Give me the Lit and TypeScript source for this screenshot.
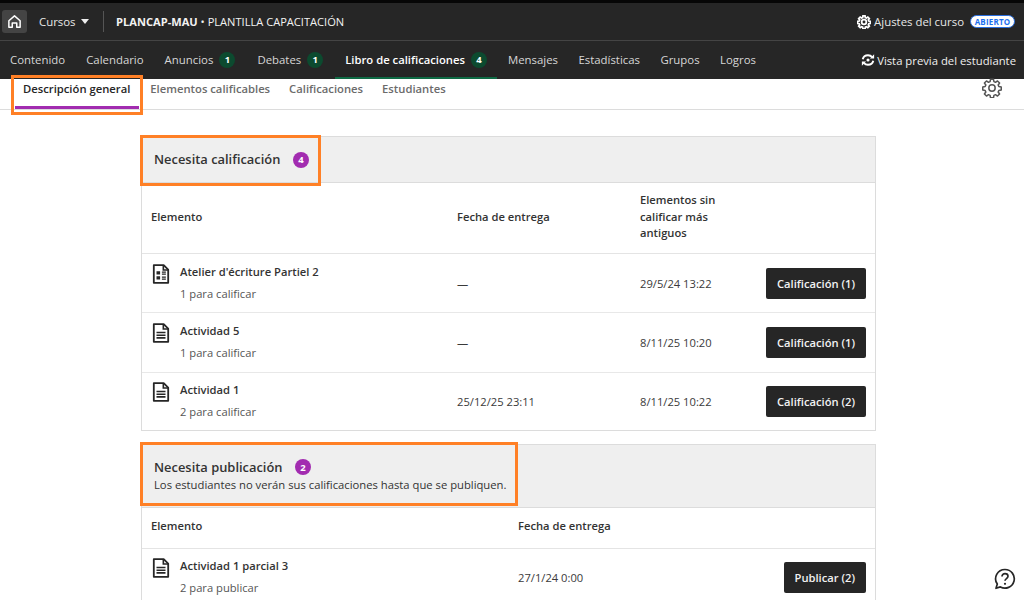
import { LitElement, html, css, svg } from "lit";
import { customElement } from "lit/decorators.js";

const docIcon = svg`<path d="M2 1.2h11l5 5V20.8H2z" fill="none" stroke="#262626" stroke-width="2" stroke-linejoin="round"/><path d="M12.6 1.4v5.2h5.2" fill="none" stroke="#262626" stroke-width="1.8"/><path d="M5 10.4h10M5 13.4h10M5 16.4h10" stroke="#262626" stroke-width="1.7"/>`;
const formIcon = svg`<path d="M2 1.2h11l5 5V20.8H2z" fill="none" stroke="#262626" stroke-width="2" stroke-linejoin="round"/><path d="M12.6 1.4v5.2h5.2" fill="none" stroke="#262626" stroke-width="1.8"/><path d="M5 8h4v3.6H5zM5 13.6h4v3.4H5z" fill="#262626"/><path d="M11 9h4.4M11 11.2h4.4M11 14.4h4.4M11 16.6h4.4" stroke="#262626" stroke-width="1.4"/>`;

const gearPath = "M10.2 1.5h3.6l.5 2.9 1.9.8 2.4-1.7 2.5 2.5-1.7 2.4.8 1.9 2.9.5v3.6l-2.9.5-.8 1.9 1.7 2.4-2.5 2.5-2.4-1.7-1.9.8-.5 2.9h-3.6l-.5-2.9-1.9-.8-2.4 1.7-2.5-2.5 1.7-2.4-.8-1.9-2.9-.5v-3.6l2.9-.5.8-1.9-1.7-2.4 2.5-2.5 2.4 1.7 1.9-.8z";

interface Row { icon: "doc" | "form"; name: string; sub: string; due: string; old?: string; btn: string; }

const gradeRows: Row[] = [
  { icon: "form", name: "Atelier d'écriture Partiel 2", sub: "1 para calificar", due: "—", old: "29/5/24 13:22", btn: "Calificación (1)" },
  { icon: "doc", name: "Actividad 5", sub: "1 para calificar", due: "—", old: "8/11/25 10:20", btn: "Calificación (1)" },
  { icon: "doc", name: "Actividad 1", sub: "2 para calificar", due: "25/12/25 23:11", old: "8/11/25 10:22", btn: "Calificación (2)" },
];
const pubRows: Row[] = [
  { icon: "doc", name: "Actividad 1 parcial 3", sub: "2 para publicar", due: "27/1/24 0:00", btn: "Publicar (2)" },
];

@customElement("app-root")
export class AppRoot extends LitElement {
  static styles = css`
    :host { display: block; width: 1024px; height: 600px; overflow: hidden; position: relative; background: #fff; font-family: "Open Sans", sans-serif; color: #262626; }
    * { box-sizing: border-box; }
    .strip { height: 3px; background: #060606; }
    .top { height: 38px; background: #262626; border-bottom: 1px solid #444; display: flex; align-items: center; color: #e8e8e8; font-size: 11.4px; padding: 0 9px 0 2px; }
    .home { width: 25px; height: 23px; background: #444; border-radius: 3px; display: flex; align-items: center; justify-content: center; }
    .cursos { margin-left: 12px; display: flex; align-items: center; gap: 5px; }
    .caret { width: 0; height: 0; border-left: 4px solid transparent; border-right: 4px solid transparent; border-top: 5px solid #eee; }
    .sep { width: 1px; height: 21px; background: #555; margin: 0 12.5px 0 14px; }
    .course { color: #f2f2f2; font-size: 11.1px; }
    .course b { font-weight: 700; }
    .spacer { flex: 1; }
    .settings { display: flex; align-items: center; gap: 3px; font-size: 11.4px; }
    .open { margin-left: 3px; width: 45px; height: 13px; border-radius: 7px; background: #fff; border: 1px solid #2a6fe0; color: #1c6ff0; font-size: 8px; font-weight: 700; display: flex; align-items: center; justify-content: center; letter-spacing: 0.2px; }
    .nav { height: 38px; background: #262626; display: flex; align-items: stretch; padding: 0 8px 0 10px; font-size: 11.4px; color: #d6d6d6; }
    .nav a { display: flex; align-items: center; gap: 6px; margin-right: 21px; border-bottom: 2px solid transparent; padding-top: 1px; }
    .nav a.badged { margin-right: 22px; }
    .nav a.on { color: #fff; font-weight: 600; border-bottom-color: #0f6b45; padding: 1px 10px 0; margin: 0 11px 0 -10px; font-size: 11.25px; }
    .nav a.on ~ a { margin-right: 20.4px; }
    .count { width: 16px; height: 16px; border-radius: 50%; background: #0c4a2f; color: #fff; font-size: 9.5px; font-weight: 700; display: flex; align-items: center; justify-content: center; }
    .preview { display: flex; align-items: center; gap: 2px; color: #f0f0f0; font-size: 11.3px; }
    .tabs { height: 31px; border-bottom: 1px solid #dcdcdc; display: flex; padding-left: 15px; font-size: 11.26px; font-weight: 600; color: #6b6b6b; position: relative; }
    .tabs span { padding: 2px 0 0; margin-right: 19px; }
    .tabs span.on { color: #262626; padding: 2px 9px 0 8px; margin-right: 11px; border-bottom: 3px solid #a22cb0; height: 30px; }
    .cog { position: absolute; right: 22px; top: -1px; }
    .main { padding: 26px 0 0 141px; width: 876px; display: flex; flex-direction: column; gap: 13px; }
    .section { border: 1px solid #dcdcdc; }
    .head { background: #efefef; border-bottom: 1px solid #dcdcdc; padding: 0 12px; display: flex; flex-direction: column; justify-content: center; }
    .h1 { height: 46px; }
    .h2 { height: 63px; }
    .h2 .title { margin-bottom: 1px; }
    .title { display: flex; align-items: center; gap: 12.5px; font-size: 12.9px; font-weight: 600; line-height: 17px; color: #333; }
    .badge { width: 16px; height: 16px; border-radius: 50%; background: #a22cb0; color: #fff; font-size: 9.5px; font-weight: 700; display: flex; align-items: center; justify-content: center; }
    .note { font-size: 11.25px; line-height: 16px; color: #333; }
    .grade { display: grid; grid-template-columns: 306px 183px 1fr auto; align-items: center; padding: 0 9px; font-size: 11.2px; }
    .pub { display: grid; grid-template-columns: 367px 1fr auto; align-items: center; padding: 0 9px; font-size: 11.2px; }
    .thead { font-weight: 600; color: #333; border-bottom: 1px solid #e4e4e4; line-height: 16.6px; padding-bottom: 2px; }
    .grade.thead { height: 71px; }
    .pub.thead { height: 41px; }
    .row { border-bottom: 1px solid #e8e8e8; color: #3a3a3a; height: 59.4px; }
    .row:last-child { border-bottom: 0; height: 57px; }
    .item { display: flex; align-items: flex-start; gap: 10px; padding: 0 0 2px 1px; }
    .item svg { flex: none; margin-top: 1px; }
    .name { font-weight: 600; color: #333; line-height: 17px; }
    .sub { line-height: 17px; margin-top: 5px; color: #555; }
    button { font: inherit; font-weight: 600; background: #262626; color: #f2f2f2; border: 0; border-radius: 2px; height: 31px; padding: 0 11px; font-size: 11.2px; }
    .mark { position: absolute; border: 3px solid #ff8026; pointer-events: none; }
    .m1 { left: 11px; top: 75px; width: 132px; height: 40px; }
    .m2 { left: 140px; top: 135px; width: 181px; height: 51px; }
    .m3 { left: 140px; top: 442px; width: 378px; height: 64px; }
    .help { position: absolute; left: 994px; top: 568px; }
  `;

  private row(r: Row) {
    return html`<div class="${r.old ? "grade" : "pub"} row">
      <div class="item">
        <svg width="18" height="20" viewBox="0 0 20 22">${r.icon === "doc" ? docIcon : formIcon}</svg>
        <div><div class="name">${r.name}</div><div class="sub">${r.sub}</div></div>
      </div>
      <div>${r.due}</div>
      ${r.old ? html`<div>${r.old}</div>` : ""}
      <button>${r.btn}</button>
    </div>`;
  }

  render() {
    const navA = (t: string, n?: number, on = false) => html`<a class="${on ? "on" : ""} ${n ? "badged" : ""}">${t}${n ? html`<span class="count">${n}</span>` : ""}</a>`;
    return html`
      <div class="strip"></div>
      <div class="top">
        <div class="home"><svg width="15" height="15" viewBox="0 0 16 16"><path d="M2 7.2 8 2l6 5.2V14h-3.6V9.6H5.6V14H2z" fill="none" stroke="#fff" stroke-width="1.6" stroke-linejoin="round"/></svg></div>
        <div class="cursos">Cursos <span class="caret"></span></div>
        <div class="sep"></div>
        <div class="course"><b>PLANCAP-MAU</b> • PLANTILLA CAPACITACIÓN</div>
        <div class="spacer"></div>
        <div class="settings">
          <svg width="14" height="14" viewBox="0 0 24 24"><path d="${gearPath}" fill="none" stroke="#fff" stroke-width="3"/><circle cx="12" cy="12" r="4" fill="none" stroke="#fff" stroke-width="3"/></svg>
          Ajustes del curso<span class="open">ABIERTO</span>
        </div>
      </div>
      <div class="nav">
        ${navA("Contenido")}${navA("Calendario")}${navA("Anuncios", 1)}${navA("Debates", 1)}${navA("Libro de calificaciones", 4, true)}${navA("Mensajes")}${navA("Estadísticas")}${navA("Grupos")}${navA("Logros")}
        <div class="spacer"></div>
        <div class="preview">
          <svg width="14" height="14" viewBox="0 0 16 16"><path d="M2 7.2C2.6 4.4 5 2.6 8 2.6c2 0 3.6.8 4.8 2.2M14 8.8c-.6 2.8-3 4.6-6 4.6-2 0-3.6-.8-4.8-2.2" fill="none" stroke="#fff" stroke-width="2.2"/><path d="M15 1.4v4.8h-4.8zM1 14.6V9.8h4.8z" fill="#fff"/><circle cx="8" cy="8" r="1.8" fill="#fff"/></svg>
          Vista previa del estudiante
        </div>
      </div>
      <div class="tabs">
        <span class="on">Descripción general</span><span>Elementos calificables</span><span>Calificaciones</span><span>Estudiantes</span>
        <svg class="cog" width="20" height="20" viewBox="0 0 24 24"><path d="${gearPath}" fill="none" stroke="#555" stroke-width="1.8" stroke-linejoin="round"/><circle cx="12" cy="12" r="3.8" fill="none" stroke="#555" stroke-width="1.8"/></svg>
      </div>
      <div class="main">
        <div class="section">
          <div class="head h1"><div class="title">Necesita calificación <span class="badge">4</span></div></div>
          <div class="grade thead"><div>Elemento</div><div>Fecha de entrega</div><div>Elementos sin<br />calificar más<br />antiguos</div><div></div></div>
          ${gradeRows.map((r) => this.row(r))}
        </div>
        <div class="section">
          <div class="head h2"><div class="title">Necesita publicación <span class="badge">2</span></div><div class="note">Los estudiantes no verán sus calificaciones hasta que se publiquen.</div></div>
          <div class="pub thead"><div>Elemento</div><div>Fecha de entrega</div><div></div></div>
          ${pubRows.map((r) => this.row(r))}
        </div>
      </div>
      <div class="mark m1"></div><div class="mark m2"></div><div class="mark m3"></div>
      <svg class="help" width="22" height="22" viewBox="0 0 22 22"><path d="M11 1.5a9.3 9.3 0 1 1-4.6 17.4L2 20.3l1.3-4.2A9.3 9.3 0 0 1 11 1.5z" fill="none" stroke="#262626" stroke-width="1.7" stroke-linejoin="round"/><path d="M8 8.4c0-1.8 1.4-2.8 3-2.8s3 1 3 2.6c0 2.3-3 2.4-3 4.6" fill="none" stroke="#262626" stroke-width="1.7"/><circle cx="11" cy="15.8" r="1.1" fill="#262626"/></svg>
    `;
  }
}
